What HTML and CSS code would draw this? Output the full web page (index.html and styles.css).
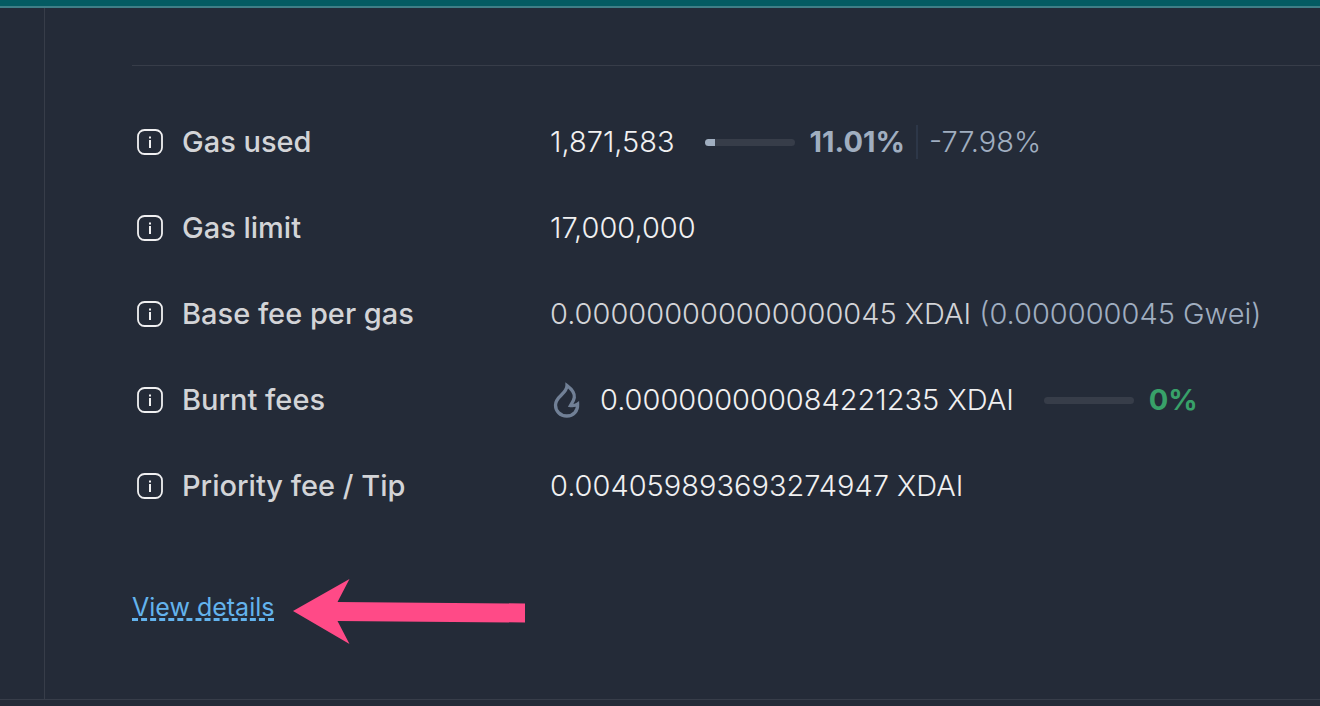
FILE: index.html
```
<!DOCTYPE html>
<html lang="en">
  <head>
    <meta charset="UTF-8" />
    <meta name="viewport" content="width=device-width, initial-scale=1.0" />
    <title>Block details</title>
    <link rel="stylesheet" href="styles.css">
  </head>
  <body>
    <svg class="sprite" aria-hidden="true">
      <symbol id="icon-info" viewBox="0 0 28 28">
        <rect x="2" y="2" width="24" height="24" rx="6.500" fill="none" stroke="currentColor" stroke-width="1.800" />
        <path d="M13 8.600h2v1.800h-2zM13 12h2v8h-2z" fill="currentColor" />
      </symbol>
    </svg>

    <div class="top-bar"></div>

    <div class="layout">
      <aside class="sidebar"></aside>

      <main class="content">
        <dl class="details">
          <div class="row">
            <dt><svg class="info"><use href="#icon-info" /></svg>Gas used</dt>
            <dd>
              <span>1,871,583</span>
              <span class="utilization">
                <span class="track"><span class="fill" style="width: 11.01%"></span></span>
                <strong>11.01%</strong>
              </span>
              <span class="target">-77.98%</span>
            </dd>
          </div>
          <div class="row">
            <dt><svg class="info"><use href="#icon-info" /></svg>Gas limit</dt>
            <dd>17,000,000</dd>
          </div>
          <div class="row">
            <dt><svg class="info"><use href="#icon-info" /></svg>Base fee per gas</dt>
            <dd class="base-fee">0.000000000000000045 XDAI <span class="secondary">(0.000000045 Gwei)</span></dd>
          </div>
          <div class="row">
            <dt><svg class="info"><use href="#icon-info" /></svg>Burnt fees</dt>
            <dd>
              <svg class="flame" viewBox="0 0 34 40">
                <path d="M17 5.500C21 8.500 24.800 13 24.300 17.500C23.900 20.500 22 23 20.500 25.500C23.500 26 25.500 25.500 27.600 24C28 31 23.500 36 16.800 36C10 36 5.500 31 5.500 25C5.500 16 17 14 17 5.500Z" fill="none" stroke="currentColor" stroke-width="3.300" />
              </svg>
              <span>0.000000000084221235 XDAI</span>
              <span class="utilization">
                <span class="track"></span>
                <strong class="green">0%</strong>
              </span>
            </dd>
          </div>
          <div class="row">
            <dt><svg class="info"><use href="#icon-info" /></svg>Priority fee / Tip</dt>
            <dd>0.004059893693274947 XDAI</dd>
          </div>
        </dl>

        <div class="more">
          <a class="view-details" href="#details">View details</a>
          <svg class="arrow" viewBox="0 0 232 66">
            <path d="M0 32L56.500 0L44.500 23L232 24.500V43.500L44.500 42L56.500 65Z" fill="#ff4a87" />
          </svg>
        </div>
      </main>
    </div>

    <footer class="footer"></footer>
  </body>
</html>
```

FILE: styles.css
```
* {
  box-sizing: border-box;
}

body {
  margin: 0;
  min-height: 100vh;
  display: flex;
  flex-direction: column;
  background-color: #242b38;
  color: #f0f0f1;
  font-family: Inter, sans-serif;
  font-size: 29px;
  line-height: 34px;
}

.sprite {
  display: none;
}

.top-bar {
  height: 8px;
  background-color: #045b62;
  border-bottom: 2px solid #3f7e87;
}

.layout {
  flex: 1;
  display: flex;
}

.sidebar {
  width: 45px;
  flex-shrink: 0;
  border-right: 1px solid #373d49;
}

.content {
  flex: 1;
  min-width: 0;
  padding: 57px 0 54px 87px;
}

.details {
  margin: 0;
  padding-top: 59px;
  border-top: 1px solid #373d49;
  display: grid;
  row-gap: 52px;
}

.row {
  display: grid;
  grid-template-columns: 418px 1fr;
  grid-auto-rows: 34px;
  align-items: center;
  white-space: nowrap;
}

dt {
  display: flex;
  align-items: center;
  color: #d3d4d7;
  font-weight: 500;
}

dd {
  margin: 0;
  display: flex;
  align-items: center;
  font-weight: 300;
}

.info {
  width: 28px;
  height: 28px;
  margin: 0 18px 0 4px;
  color: #f0f0f1;
}

.base-fee {
  display: block;
  color: #d3d4d7;
}

.secondary,
.target,
.utilization {
  color: #a0aec0;
}

.utilization {
  display: flex;
  align-items: center;
  margin-left: 30px;
}

.utilization strong {
  font-weight: 700;
}

.track {
  width: 90px;
  height: 7px;
  margin-right: 15px;
  border-radius: 4px;
  overflow: hidden;
  background-color: #373d49;
}

.fill {
  display: block;
  height: 100%;
  background-color: #a0aec0;
}

.utilization .green {
  color: #38a169;
}

.target {
  margin-left: 11px;
  padding-left: 11px;
  border-left: 2px solid #2d3748;
}

.flame {
  width: 34px;
  height: 40px;
  margin-right: 16px;
  color: #718096;
}

.more {
  display: flex;
  align-items: center;
  margin-top: 70px;
}

.view-details {
  padding-bottom: 1px;
  color: #63b3ed;
  font-size: 25px;
  line-height: 20px;
  text-decoration: none;
  border-bottom: 3px dashed #63b3ed;
}

.arrow {
  width: 232px;
  height: 66px;
  margin: 6px 0 0 19px;
}

.footer {
  height: 7px;
  border-top: 1px solid #373d49;
}
```
